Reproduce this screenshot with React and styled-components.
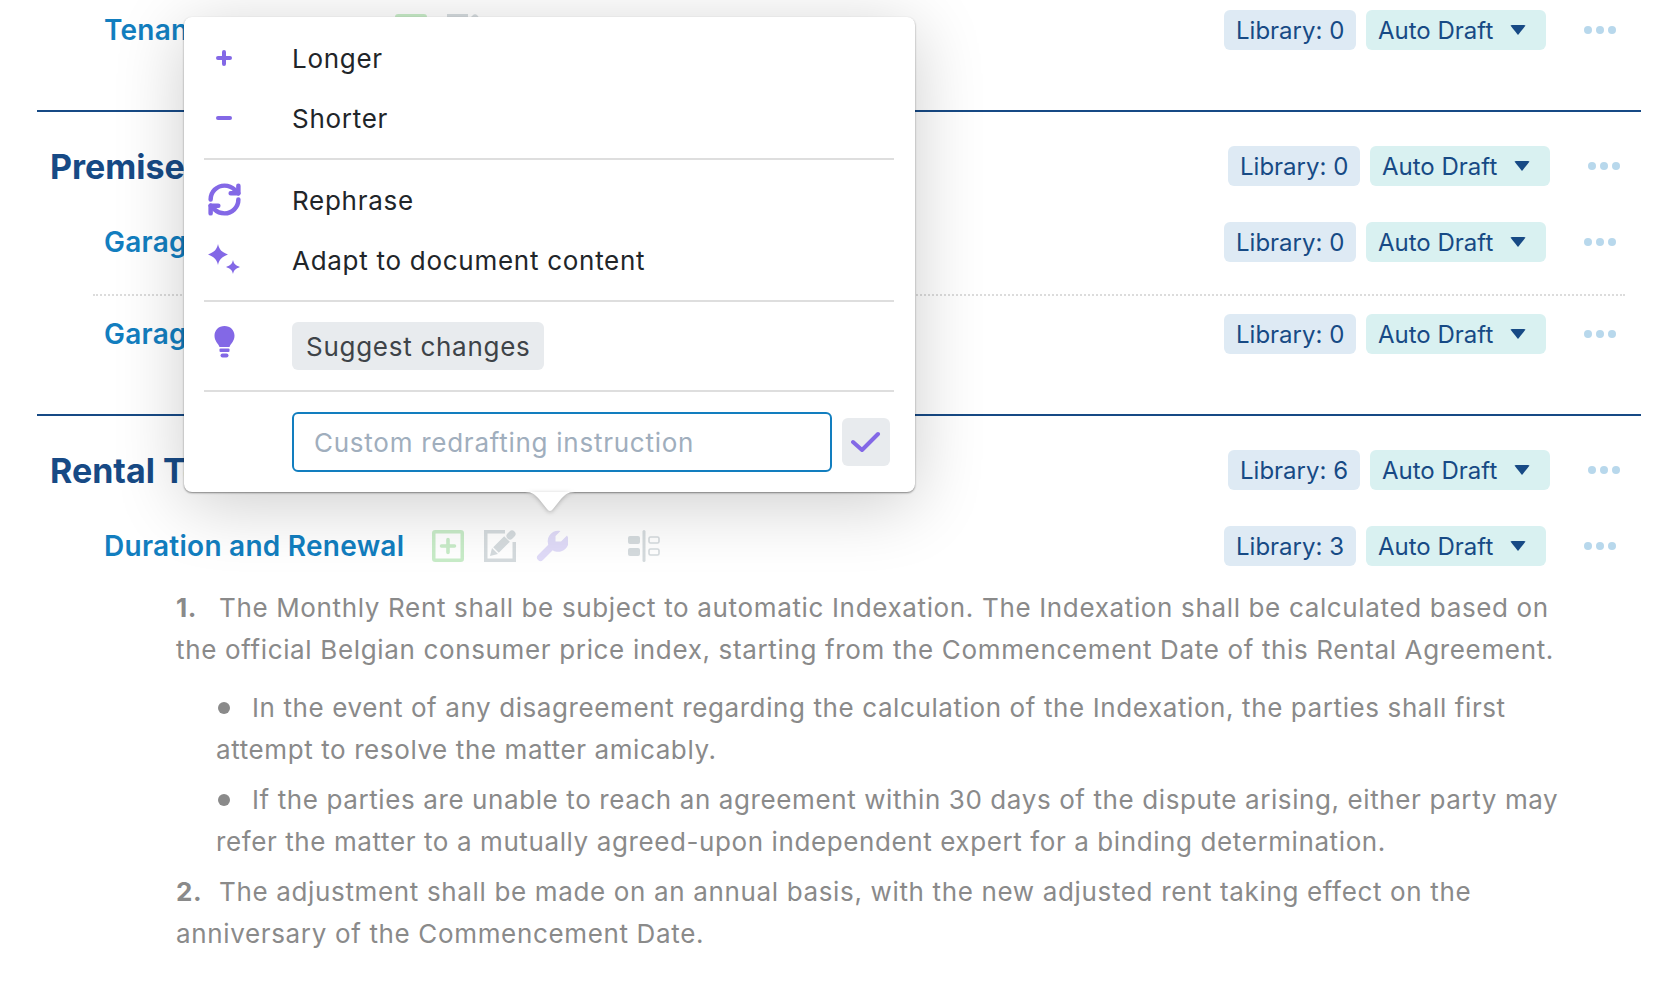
import React from "react";
import styled, { createGlobalStyle } from "styled-components";
import { RefreshCw } from "lucide-react";

const GlobalStyle = createGlobalStyle`
  html, body { margin: 0; padding: 0; background: #fff; }
  body { font-family: Inter, "Liberation Sans", sans-serif; overflow: hidden; }
`;

const Page = styled.div`
  position: relative;
  width: 1654px;
  height: 984px;
  overflow: hidden;
  padding: 10px 13px 0 37px;
  box-sizing: border-box;
`;

const Section = styled.section`
  display: flex;
  flex-direction: column;
  padding: ${({ $first }) => ($first ? "0 0 60px" : "34px 0 60px")};
  border-bottom: ${({ $last }) => ($last ? "none" : "2px solid #174a85")};
  &:last-child { padding: 35px 0 0; }
`;

const Row = styled.div`
  display: flex;
  align-items: center;
  height: 40px;
  padding: ${({ $section }) => ($section ? "0 21px 0 13px" : "0 25px 0 67px")};
  margin-top: ${({ $top }) => $top || 0}px;
`;

const SectionTitle = styled.h2`
  margin: 0;
  font-size: 34px;
  font-weight: 700;
  color: #174a85;
  white-space: nowrap;
`;

const SubTitle = styled.h3`
  margin: 0;
  font-size: 28px;
  font-weight: 600;
  letter-spacing: 0.26px;
  color: #127ebf;
  white-space: nowrap;
`;

const Tools = styled.div`
  display: flex;
  align-items: center;
  gap: 20px;
  margin-left: ${({ $left }) => $left || 28}px;
`;

const ToolIcon = styled.span`
  display: inline-flex;
  width: 32px;
  height: 32px;
  margin-left: ${({ $gap }) => $gap || 0}px;
  color: ${({ $color }) => $color || "#d5dbde"};
  svg { display: block; width: 32px; height: 32px; }
`;

const Right = styled.div`
  display: flex;
  align-items: center;
  margin-left: auto;
`;

const Pill = styled.div`
  display: flex;
  align-items: center;
  height: 40px;
  box-sizing: border-box;
  padding: 0 12px;
  border-radius: 6px;
  font-size: 24px;
  color: #174a85;
  white-space: nowrap;
  background: ${({ $auto }) => ($auto ? "#d9f1f1" : "#deeaf4")};
  width: ${({ $auto }) => ($auto ? "180px" : "132px")};
  margin-left: ${({ $auto }) => ($auto ? "10px" : "0")};
`;

const Caret = styled.span`
  width: 0;
  height: 0;
  margin-left: auto;
  margin-right: 8px;
  border-left: 8px solid transparent;
  border-right: 8px solid transparent;
  border-top: 10px solid #174a85;
  border-radius: 2px;
`;

const Dots = styled.div`
  display: flex;
  gap: 4px;
  margin-left: 38px;
  span {
    width: 8px;
    height: 8px;
    border-radius: 50%;
    background: #b8d8ec;
  }
`;

const DottedRule = styled.div`
  margin: 32px 16px 18px 56px;
  border-top: 2px dotted #dcdcdc;
`;

const Body = styled.div`
  width: 1390px;
  margin: 21px 0 0 139px;
  font-size: 26px;
  line-height: 42px;
  font-weight: 400;
  color: #8a8a8a;
`;

const Para = styled.p`
  margin: ${({ $top }) => $top || 0}px 0 0 ${({ $indent }) => ($indent ? "40px" : "0")};
  letter-spacing: ${({ $indent }) => ($indent ? "0.6px" : "0.65px")};
`;

const Num = styled.b`
  display: inline-block;
  width: 43px;
  font-weight: 700;
`;

const Bullet = styled.span`
  display: inline-block;
  width: 12px;
  height: 12px;
  border-radius: 50%;
  background: #8a8a8a;
  margin: 0 22px 4px 2px;
  vertical-align: middle;
`;

const Popover = styled.div`
  position: absolute;
  left: 184px;
  top: 17px;
  width: 731px;
  height: 475px;
  box-sizing: border-box;
  padding: 11px 21px 0 20px;
  background: #fff;
  border-radius: 8px;
  letter-spacing: 0.72px;
  box-shadow: 0 1px 2px rgba(0, 0, 0, 0.45), 0 12px 70px rgba(0, 0, 0, 0.2);
  z-index: 5;
`;

const Arrow = styled.svg`
  position: absolute;
  left: 341px;
  top: 475px;
  width: 50px;
  height: 22px;
  filter: drop-shadow(0 1px 2px rgba(0, 0, 0, 0.25));
`;

const Item = styled.div`
  display: grid;
  grid-template-columns: 88px 1fr;
  align-items: center;
  height: 60px;
  font-size: 26px;
  color: #212529;
`;

const ItemIcon = styled.span`
  display: flex;
  justify-content: center;
  width: 40px;
  height: 0;
  align-items: center;
  margin-bottom: ${({ $raise }) => $raise || 0}px;
  color: #8368e6;
  svg { display: block; flex: none; }
`;

const Divider = styled.div`
  height: 2px;
  background: #dedede;
  margin: ${({ $m }) => $m || "10px 0"};
`;

const SuggestRow = styled.div`
  display: grid;
  grid-template-columns: 88px 1fr;
  align-items: center;
  height: 48px;
`;

const SuggestButton = styled.button`
  all: unset;
  justify-self: start;
  height: 48px;
  padding: 0 14px;
  border-radius: 6px;
  background: #e8ebee;
  color: #3e4348;
  letter-spacing: 0.72px;
  font: 400 26px Inter, sans-serif;
`;

const CustomRow = styled.div`
  display: flex;
  align-items: center;
  padding-left: 88px;
`;

const CustomInput = styled.input`
  all: unset;
  box-sizing: border-box;
  width: 540px;
  height: 60px;
  padding: 0 20px;
  border: 2px solid #127ebf;
  border-radius: 6px;
  font: 400 26px Inter, sans-serif;
  letter-spacing: 0.74px;
  &::placeholder { color: #a0aebd; opacity: 1; }
`;

const CheckButton = styled.button`
  all: unset;
  display: flex;
  align-items: center;
  justify-content: center;
  width: 48px;
  height: 48px;
  margin-left: 10px;
  border-radius: 6px;
  background: #e8ebee;
`;

const PlusBox = () => (
  <svg viewBox="0 0 32 32" fill="none">
    <rect x="1.75" y="1.75" width="28.5" height="28.5" rx="1.5" stroke="#c8ecc8" strokeWidth="3.5" />
    <path d="M16 9.5v13M9.5 16h13" stroke="#c8ecc8" strokeWidth="3.6" strokeLinecap="round" />
  </svg>
);

const EditBox = () => (
  <svg viewBox="0 0 32 32" fill="none">
    <path d="M21 1.75H1.75v28.5h28.5V12" stroke="currentColor" strokeWidth="3.5" />
    <path d="M6 26l2-8 6 6z" fill="currentColor" />
    <path d="M12 20L23 9" stroke="currentColor" strokeWidth="8" />
    <path d="M26 6l2-2" stroke="currentColor" strokeWidth="7" strokeLinecap="round" />
  </svg>
);

const WrenchIcon = () => (
  <svg viewBox="0 0 32 32" fill="currentColor">
    <path d="M24.500 1L19.500 6v5.500H25L31 5.500A10.500 10.500 0 1 1 24.500 1z" />
    <path d="M15 17L4.500 27.500" stroke="currentColor" strokeWidth="7" strokeLinecap="round" />
  </svg>
);

const AlignIcon = () => (
  <svg viewBox="0 0 32 32" fill="none">
    <rect x="14.500" y="0" width="3" height="32" rx="1.500" fill="currentColor" />
    <rect x="0" y="6" width="12" height="8" rx="2" fill="currentColor" />
    <rect x="0" y="18" width="12" height="8" rx="2" fill="currentColor" />
    <rect x="21" y="7" width="10" height="6" rx="1.500" stroke="currentColor" strokeWidth="1.600" />
    <rect x="21" y="19" width="10" height="6" rx="1.500" stroke="currentColor" strokeWidth="1.600" />
  </svg>
);

const PlusIcon = () => (
  <svg width="16" height="16" viewBox="0 0 16 16" fill="none">
    <path d="M8 2v12M2 8h12" stroke="currentColor" strokeWidth="4" strokeLinecap="round" />
  </svg>
);

const MinusIcon = () => (
  <svg width="16" height="16" viewBox="0 0 16 16" fill="none">
    <path d="M2 8h12" stroke="currentColor" strokeWidth="4" strokeLinecap="round" />
  </svg>
);

const Sparkles = () => (
  <svg width="32" height="32" viewBox="0 0 32 32" fill="currentColor">
    <path d="M10 0c1.200 5.500 3.500 8 10 10.500-6.500 2.500-8.800 5-10 10.500-1.200-5.500-3.500-8-10-10.500C6.500 8 8.800 5.500 10 0z" />
    <path d="M25 16c.9 3.800 2.300 5.300 7 7-4.700 1.700-6.100 3.200-7 7-.9-3.800-2.300-5.300-7-7 4.700-1.700 6.100-3.200 7-7z" />
  </svg>
);

const Bulb = () => (
  <svg width="21" height="32" viewBox="0 0 21 32" fill="currentColor">
    <path d="M10.500 0C16.300 0 20.500 4.200 20.500 9.800c0 5.200-3.500 7.500-5 11.200h-10C4 17.300.5 15 .5 9.800.5 4.200 4.700 0 10.500 0z" />
    <rect x="5.500" y="22.500" width="10" height="3.500" rx="1" />
    <rect x="6.500" y="27.500" width="8" height="4" rx="2" />
  </svg>
);

const Controls = ({ library }) => (
  <Right>
    <Pill>Library: {library}</Pill>
    <Pill $auto>
      Auto Draft
      <Caret />
    </Pill>
    <Dots>
      <span />
      <span />
      <span />
    </Dots>
  </Right>
);

const RowTools = ({ wrench, left }) => (
  <Tools $left={left}>
    <ToolIcon><PlusBox /></ToolIcon>
    <ToolIcon><EditBox /></ToolIcon>
    {wrench && (
      <>
        <ToolIcon $color="#e0dbf8"><WrenchIcon /></ToolIcon>
        <ToolIcon $gap={40}><AlignIcon /></ToolIcon>
      </>
    )}
  </Tools>
);

export default function App() {
  return (
    <Page>
      <GlobalStyle />
      <Section $first>
        <Row>
          <SubTitle>Tenant Information</SubTitle>
          <RowTools left={30} />
          <Controls library={0} />
        </Row>
      </Section>

      <Section>
        <Row $section>
          <SectionTitle>Premises</SectionTitle>
          <Controls library={0} />
        </Row>
        <Row $top={36}>
          <SubTitle>Garage</SubTitle>
          <Controls library={0} />
        </Row>
        <DottedRule />
        <Row>
          <SubTitle>Garage</SubTitle>
          <Controls library={0} />
        </Row>
      </Section>

      <Section $last>
        <Row $section>
          <SectionTitle>Rental Terms</SectionTitle>
          <Controls library={6} />
        </Row>
        <Row $top={36}>
          <SubTitle>Duration and Renewal</SubTitle>
          <RowTools wrench />
          <Controls library={3} />
        </Row>
        <Body>
          <Para>
            <Num>1.</Num>The Monthly Rent shall be subject to automatic Indexation. The Indexation shall be
            calculated based on the official Belgian consumer price index, starting from the Commencement Date of
            this Rental Agreement.
          </Para>
          <Para $indent $top={16}>
            <Bullet />
            In the event of any disagreement regarding the calculation of the Indexation, the parties shall first
            attempt to resolve the matter amicably.
          </Para>
          <Para $indent $top={8}>
            <Bullet />
            If the parties are unable to reach an agreement within 30 days of the dispute arising, either party may
            refer the matter to a mutually agreed-upon independent expert for a binding determination.
          </Para>
          <Para $top={8}>
            <Num>2.</Num>The adjustment shall be made on an annual basis, with the new adjusted rent taking effect
            on the anniversary of the Commencement Date.
          </Para>
        </Body>
      </Section>

      <Popover>
        <Item>
          <ItemIcon><PlusIcon /></ItemIcon>
          Longer
        </Item>
        <Item>
          <ItemIcon><MinusIcon /></ItemIcon>
          Shorter
        </Item>
        <Divider />
        <Item>
          <ItemIcon $raise={2}><RefreshCw size={37} strokeWidth={2.9} /></ItemIcon>
          Rephrase
        </Item>
        <Item>
          <ItemIcon><Sparkles /></ItemIcon>
          Adapt to document content
        </Item>
        <Divider $m="10px 0 20px" />
        <SuggestRow>
          <ItemIcon $raise={8}><Bulb /></ItemIcon>
          <SuggestButton>Suggest changes</SuggestButton>
        </SuggestRow>
        <Divider $m="20px 0" />
        <CustomRow>
          <CustomInput placeholder="Custom redrafting instruction" />
          <CheckButton>
            <svg width="30" height="22" viewBox="0 0 30 22" fill="none">
              <path d="M2 11l9 8L27 3" stroke="#8368e6" strokeWidth="4" strokeLinecap="round" strokeLinejoin="round" />
            </svg>
          </CheckButton>
        </CustomRow>
        <Arrow viewBox="0 0 50 22">
          <path d="M0 0C8 0 10 3 14 7L22 17Q25 21 28 17L36 7C40 3 42 0 50 0Z" fill="#fff" />
        </Arrow>
      </Popover>
    </Page>
  );
}
